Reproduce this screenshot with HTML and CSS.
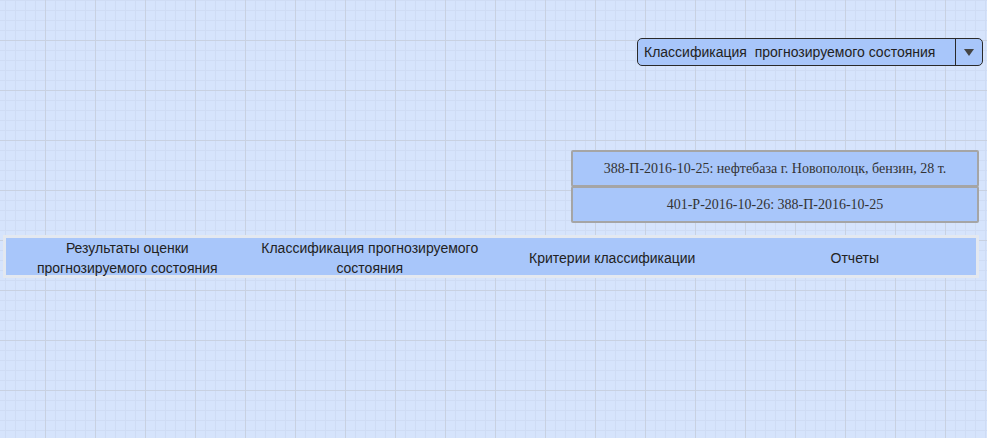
FILE: index.html
```html
<!DOCTYPE html>
<html>
<head>
<meta charset="utf-8">
<link rel="stylesheet" href="styles.css">
</head>
<body>
<div class="page">
  <div class="toolbar">
    <div class="select">
      <span class="select-text">Классификация  прогнозируемого состояния</span>
      <span class="select-arrow"><span class="tri"></span></span>
    </div>
  </div>
  <div class="cards">
    <div class="card">388-П-2016-10-25: нефтебаза г. Новополоцк, бензин, 28 т.</div>
    <div class="card">401-Р-2016-10-26: 388-П-2016-10-25</div>
  </div>
  <div class="tabs">
    <div class="tab">Результаты оценки<br>прогнозируемого состояния</div>
    <div class="tab">Классификация прогнозируемого<br>состояния</div>
    <div class="tab">Критерии классификации</div>
    <div class="tab">Отчеты</div>
  </div>
</div>
</body>
</html>
```
FILE: styles.css
```css
html, body {
  margin: 0;
  padding: 0;
  height: 100%;
}
body {
  background-color: #d6e4fc;
  background-image:
    linear-gradient(to right, #c8d1e1 1px, transparent 1px),
    linear-gradient(to bottom, #c8d1e1 1px, transparent 1px),
    linear-gradient(to right, #cfdcf4 1px, transparent 1px),
    linear-gradient(to bottom, #cfdcf4 1px, transparent 1px);
  background-size: 50px 50px, 50px 50px, 10px 10px, 10px 10px;
  background-position: 45px 0, 0 40px, 5px 0, 0 0;
  font-family: "Liberation Sans", Arial, sans-serif;
  font-size: 14px;
  color: #222;
}
.page {
  display: flex;
  flex-direction: column;
  padding-top: 38px;
}
.toolbar {
  display: flex;
  justify-content: flex-end;
  padding-right: 4px;
}
.select {
  display: flex;
  width: 346px;
  height: 28px;
  box-sizing: border-box;
  border: 1px solid #2a2a2a;
  border-radius: 5px;
  background: #a8c6fa;
}
.select-text {
  flex: 1;
  white-space: pre;
  padding-left: 6px;
  line-height: 26px;
  color: #222;
}
.select-arrow {
  width: 26px;
  border-left: 1px solid #2a2a2a;
  display: flex;
  align-items: center;
  justify-content: center;
}
.tri {
  width: 0;
  height: 0;
  border-left: 5px solid transparent;
  border-right: 5px solid transparent;
  border-top: 7px solid #444;
}
.cards {
  align-self: flex-end;
  margin-right: 8px;
  margin-top: 84px;
  width: 408px;
  display: flex;
  flex-direction: column;
}
.card {
  height: 37px;
  box-sizing: border-box;
  border: 2px solid #a5a5a5;
  border-radius: 2px;
  background: #a8c6fa;
  display: flex;
  align-items: center;
  justify-content: center;
  font-family: "Liberation Serif", "Times New Roman", serif;
  font-size: 14px;
  color: #333;
}
.card + .card {
  margin-top: -1px;
}
.tabs {
  margin: 12px 8px 0 3px;
  height: 43px;
  box-sizing: border-box;
  border: 3px solid #e3e8f0;
  background: #a8c6fa;
  display: grid;
  grid-template-columns: repeat(4, 1fr);
}
.tab {
  display: flex;
  align-items: center;
  justify-content: center;
  text-align: center;
  line-height: 20px;
  color: #222;
}
```
